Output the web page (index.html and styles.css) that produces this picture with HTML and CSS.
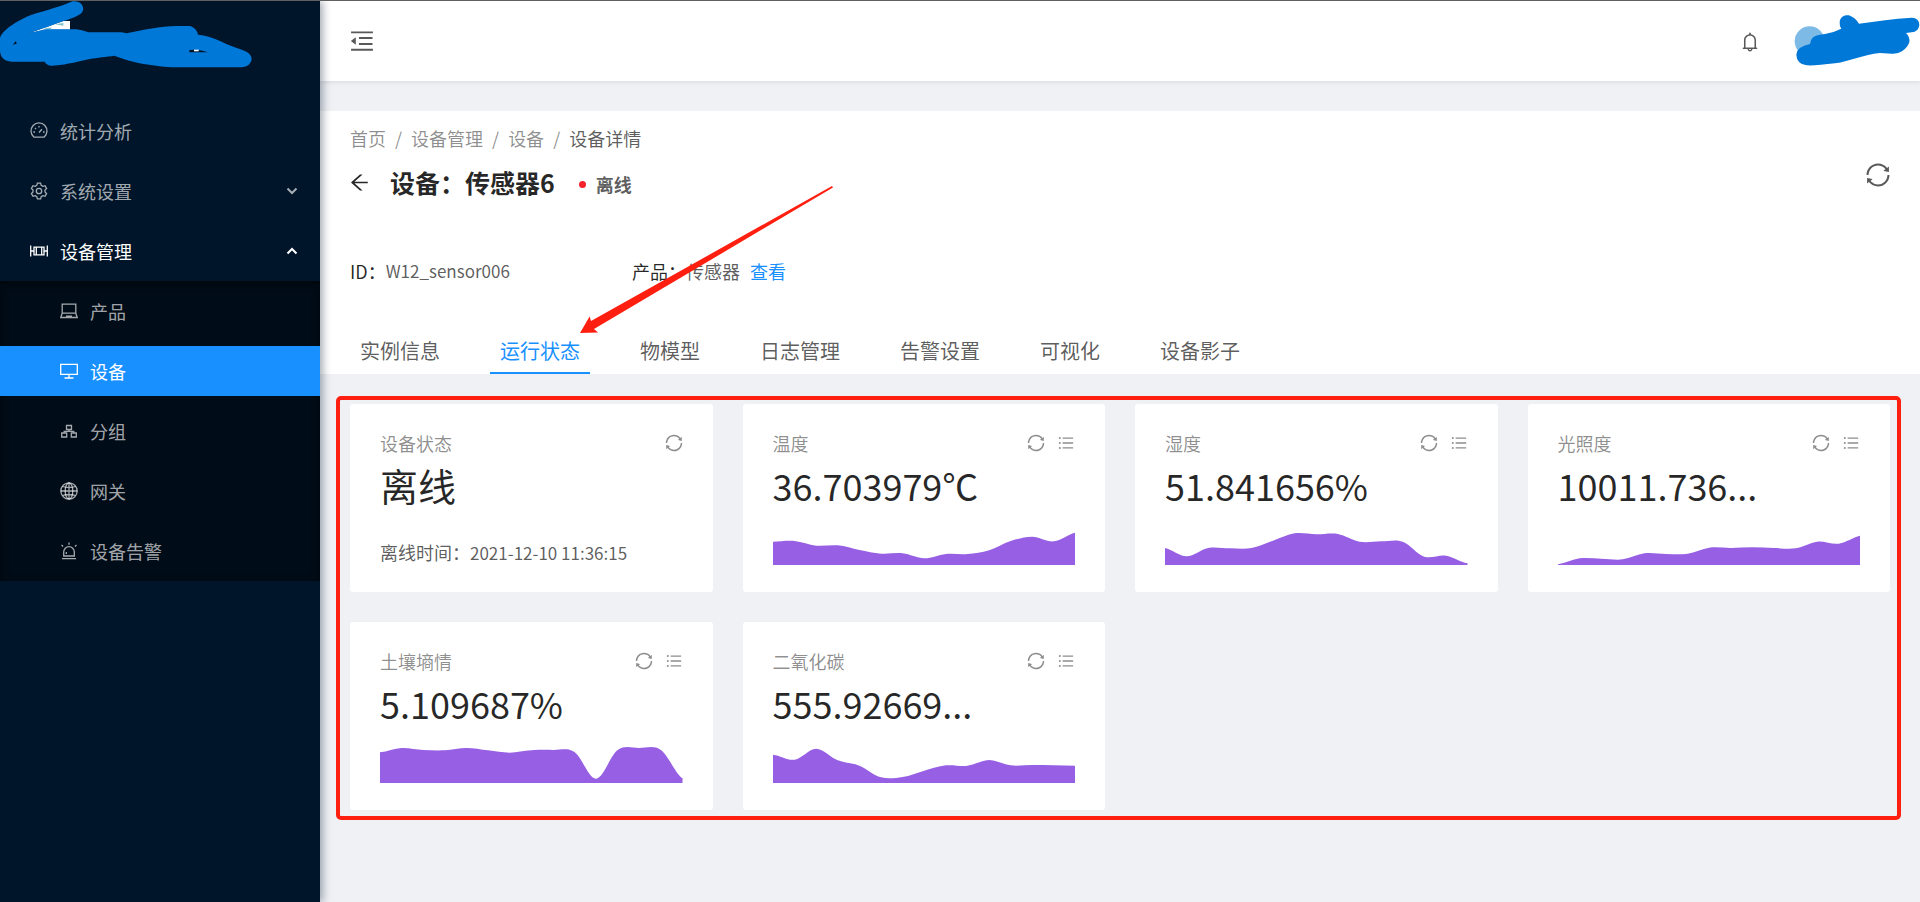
FILE: index.html
```html
<!DOCTYPE html>
<html lang="zh-CN">
<head>
<meta charset="utf-8">
<title>设备详情</title>
<link rel="stylesheet" href="styles.css">
</head>
<body>
<svg class="sprite" aria-hidden="true">
  <symbol id="i-sync" viewBox="0 0 1024 1024"><path d="M168 504.2c1-43.7 10-86.1 26.9-126 17.3-41 42.1-77.7 73.7-109.4S337 212.3 378 195c42.4-17.9 87.4-27 133.9-27s91.5 9.1 133.8 27A341.5 341.5 0 01755 268.8c9.9 9.9 19.2 20.4 27.8 31.4l-60.2 47a8 8 0 003 14.1l175.7 43c5 1.2 9.9-2.6 9.9-7.7l.8-180.9c0-6.7-7.7-10.5-12.9-6.3l-56.4 44.1C765.8 155.1 646.2 92 511.8 92 282.7 92 96.3 275.6 92 503.8a8 8 0 008 8.2h60c4.4 0 7.9-3.5 8-7.8zm756 7.8h-60c-4.4 0-7.9 3.5-8 7.8-1 43.7-10 86.1-26.9 126-17.3 41-42.1 77.8-73.7 109.4A342.45 342.45 0 01512.1 856a342.24 342.24 0 01-243.2-100.8c-9.9-9.9-19.2-20.4-27.8-31.4l60.2-47a8 8 0 00-3-14.1l-175.7-43c-5-1.2-9.9 2.6-9.9 7.7l-.7 181c0 6.7 7.7 10.5 12.9 6.3l56.4-44.1C258.2 868.9 377.8 932 512.2 932c229.2 0 415.5-183.7 419.8-411.8a8 8 0 00-8-8.2z"/></symbol>
  <symbol id="i-list" viewBox="-57 -57 1138 1138"><path d="M320 192h600v72H320zM320 476h600v72H320zM320 760h600v72H320z"/><circle cx="160" cy="228" r="56"/><circle cx="160" cy="512" r="56"/><circle cx="160" cy="796" r="56"/></symbol>
</svg>
<div class="layout">
  <aside class="sider">
    <div class="logo">
      <svg class="logo-mark" viewBox="0 0 960 243" aria-hidden="true">
        <path fill="#fff" d="M88 99L190 63h20v26h-70z"/>
        <path fill="#7cc4c9" d="M130 88l12-5h14l-6 6zM165 73l25-4v8z"/>
        <path fill="#0078d7" fill-rule="evenodd" d="M218 4C242 0 254 20 248 34C240 52 190 62 150 78L88 99L135 88H230Q250 91 265 97H365L380 100C430 90 480 78 530 78H570Q590 84 594 104C640 108 670 130 700 140C735 152 755 158 755 178Q752 200 725 202H515C450 196 400 190 343 167C320 170 290 173 270 177C220 188 190 196 152 197Q138 194 134 185H35C10 183 0 170 0 150V115C5 90 50 65 80 50C120 35 170 25 218 4ZM38 134L50 131L48 123ZM568 157H624Q600 147 568 150Z"/>
        <path fill="#fff" d="M582 149h14v5h-14z"/>
      </svg>
    </div>
    <nav class="menu">
      <a class="item" href="#">
        <svg class="ico" viewBox="0 0 18 18"><path d="M4 15.2a8 8 0 1 1 10 0zM9 10.5l3-3.2M3.4 10h1.6M13 10h1.6M5 6l1 1M9 4v1.5"/></svg>
        <span>统计分析</span>
      </a>
      <a class="item" href="#">
        <svg class="ico" viewBox="0 0 18 18"><path d="M7.4 1.2h3.2l.6 2.2 1.6.9 2.2-.6 1.6 2.8-1.6 1.6v1.8l1.6 1.6-1.6 2.8-2.2-.6-1.6.9-.6 2.2H7.4l-.6-2.2-1.6-.9-2.2.6-1.6-2.8L3 9.900V8.100L1.400 6.500 3 3.700l2.200.6 1.600-.9z"/><circle cx="9" cy="9" r="2.700"/></svg>
        <span>系统设置</span>
        <svg class="chev" viewBox="0 0 12 8"><path d="M1.500 1.500L6 6l4.500-4.500"/></svg>
      </a>
      <a class="item open" href="#">
        <svg class="ico" viewBox="0 0 18 18"><path d="M.7 3.500v11M17.300 3.500v11M1 9h3M14 9h3M4 5.200h10v7.600H4zM6.300 5v8M11.700 5v8"/></svg>
        <span>设备管理</span>
        <svg class="chev" viewBox="0 0 12 8"><path d="M1.500 6.500L6 2l4.500 4.500"/></svg>
      </a>
      <div class="submenu">
        <a class="item" href="#">
          <svg class="ico" viewBox="0 0 18 18"><path d="M2.200 2.200h13.600v9H2.200zM2.200 11.200L.8 15.500h16.400l-1.400-4.300M6 14.200h6"/></svg>
          <span>产品</span>
        </a>
        <a class="item active" href="#" aria-current="page">
          <svg class="ico" viewBox="0 0 18 18"><path d="M.7 2.300h16.600v10H.7zM9 12.300v3.500M4.500 16h9"/></svg>
          <span>设备</span>
        </a>
        <a class="item" href="#">
          <svg class="ico" viewBox="0 0 18 18"><path d="M6.500 3.500h5v4h-5zM1.700 11h5v4h-5zM11.300 11h5v4h-5zM9 7.500v1.800M4.200 11V9.300h9.600V11"/></svg>
          <span>分组</span>
        </a>
        <a class="item" href="#">
          <svg class="ico" viewBox="0 0 18 18"><circle cx="9" cy="9" r="8.200"/><ellipse cx="9" cy="9" rx="3.800" ry="8.200"/><path d="M9 .8v16.400M.8 9h16.400M2.500 4.500q6.500 2 13 0M2.500 13.500q6.500-2 13 0"/></svg>
          <span>网关</span>
        </a>
        <a class="item" href="#">
          <svg class="ico" viewBox="0 0 18 18"><path d="M3.700 14V10a5.300 5.300 0 0 1 10.600 0v4zM2 16.700h14M9 .5v2.200M1.500 3l1.600 1.400M16.500 3l-1.600 1.400M6.300 12v-2"/></svg>
          <span>设备告警</span>
        </a>
      </div>
    </nav>
  </aside>

  <div class="main">
    <header class="header">
      <button class="icon-btn fold" aria-label="收起菜单">
        <svg viewBox="0 0 1024 1024"><path d="M408 442h480c4.400 0 8-3.600 8-8v-56c0-4.400-3.600-8-8-8H408c-4.400 0-8 3.600-8 8v56c0 4.400 3.600 8 8 8zm-8 204c0 4.400 3.600 8 8 8h480c4.400 0 8-3.600 8-8v-56c0-4.400-3.600-8-8-8H408c-4.400 0-8 3.600-8 8v56zm504-486H120c-4.400 0-8 3.600-8 8v56c0 4.400 3.600 8 8 8h784c4.400 0 8-3.600 8-8v-56c0-4.400-3.600-8-8-8zm0 632H120c-4.400 0-8 3.600-8 8v56c0 4.400 3.600 8 8 8h784c4.400 0 8-3.600 8-8v-56c0-4.400-3.600-8-8-8zM115.400 518.900L271.700 642c5.800 4.600 14.400.5 14.400-6.900V388.900c0-7.400-8.500-11.500-14.400-6.900L115.400 505.100a8.740 8.740 0 000 13.800z"/></svg>
      </button>
      <button class="icon-btn bell" aria-label="通知">
        <svg viewBox="0 0 1024 1024"><path d="M816 768h-24V428c0-141.100-104.300-257.800-240-277.200V112c0-22.100-17.900-40-40-40s-40 17.900-40 40v38.800C336.300 170.200 232 286.900 232 428v340h-24c-17.700 0-32 14.300-32 32v32c0 4.400 3.600 8 8 8h216c0 61.800 50.200 112 112 112s112-50.200 112-112h216c4.400 0 8-3.600 8-8v-32c0-17.700-14.300-32-32-32zM512 888c-26.500 0-48-21.500-48-48h96c0 26.500-21.500 48-48 48zM304 768V428c0-55.600 21.600-107.800 60.900-147.100S456.400 220 512 220c55.600 0 107.800 21.600 147.100 60.900S720 372.400 720 428v340H304z"/></svg>
      </button>
      <button class="user" aria-label="用户">
        <svg viewBox="279 40 381 162"><circle cx="329" cy="122" r="45" fill="#7dbbe6"/><path fill="#0078d7" d="M419 65C420 45 440 42 450 45Q465 50 477 69C530 62 580 53 635 51Q658 52 658 73Q655 95 635 95L618 97Q630 108 628 125Q622 142 606 152Q595 160 575 159L540 157C490 162 450 182 405 188C370 192 340 195 320 194Q290 190 289 162Q290 138 330 130Q332 105 360 102L375 100Q400 96 424 84Q418 78 419 65Z"/></svg>
      </button>
    </header>

    <section class="page-head">
      <nav class="crumbs" aria-label="面包屑">
        <a href="#">首页</a><i>/</i><a href="#">设备管理</a><i>/</i><a href="#">设备</a><i>/</i><span>设备详情</span>
      </nav>
      <div class="title-row">
        <button class="icon-btn back" aria-label="返回">
          <svg viewBox="0 0 1024 1024"><path d="M872 474H286.900l350.200-304c5.600-4.900 2.200-14-5.200-14h-88.500c-3.900 0-7.600 1.400-10.500 3.900L155 487.800a31.960 31.960 0 000 48.300L535.100 866c1.500 1.300 3.300 2 5.200 2h91.500c7.400 0 10.800-9.200 5.200-14L286.900 550H872c4.400 0 8-3.600 8-8v-60c0-4.400-3.600-8-8-8z"/></svg>
        </button>
        <h1>设备：传感器6</h1>
        <span class="status"><span class="dot"></span>离线</span>
        <button class="icon-btn reload" aria-label="刷新"><svg><use href="#i-sync"/></svg></button>
      </div>
      <dl class="facts">
        <div><dt>ID：</dt><dd class="latin">W12_sensor006</dd></div>
        <div><dt>产品：</dt><dd>传感器<a href="#">查看</a></dd></div>
      </dl>
      <div class="tabs" role="tablist">
        <button role="tab">实例信息</button>
        <button role="tab" class="on" aria-selected="true">运行状态</button>
        <button role="tab">物模型</button>
        <button role="tab">日志管理</button>
        <button role="tab">告警设置</button>
        <button role="tab">可视化</button>
        <button role="tab">设备影子</button>
      </div>
    </section>

    <main class="cards">
      <article class="card">
        <header><h2>设备状态</h2><button class="icon-btn" aria-label="刷新"><svg><use href="#i-sync"/></svg></button></header>
        <p class="state">离线</p>
        <p class="foot">离线时间：<time class="latin">2021-12-10 11:36:15</time></p>
      </article>
      <article class="card">
        <header><h2>温度</h2><button class="icon-btn" aria-label="刷新"><svg><use href="#i-sync"/></svg></button><button class="icon-btn" aria-label="列表"><svg><use href="#i-list"/></svg></button></header>
        <p class="value">36.703979℃</p>
        <svg class="chart" data-values="70,72,58,59,45,34,35,20,33,33,44,72,85,71,97"></svg>
      </article>
      <article class="card">
        <header><h2>湿度</h2><button class="icon-btn" aria-label="刷新"><svg><use href="#i-sync"/></svg></button><button class="icon-btn" aria-label="列表"><svg><use href="#i-list"/></svg></button></header>
        <p class="value">51.841656%</p>
        <svg class="chart" data-values="51,26,51,50,51,73,95,92,93,70,71,70,25,28,5"></svg>
      </article>
      <article class="card">
        <header><h2>光照度</h2><button class="icon-btn" aria-label="刷新"><svg><use href="#i-sync"/></svg></button><button class="icon-btn" aria-label="列表"><svg><use href="#i-list"/></svg></button></header>
        <p class="value">10011.736...</p>
        <svg class="chart" data-values="2,20,19,17,35,33,34,52,51,53,51,50,70,64,88"></svg>
      </article>
      <article class="card">
        <header><h2>土壤墒情</h2><button class="icon-btn" aria-label="刷新"><svg><use href="#i-sync"/></svg></button><button class="icon-btn" aria-label="列表"><svg><use href="#i-list"/></svg></button></header>
        <p class="value">5.109687%</p>
        <svg class="chart" data-values="92,105,99,98,105,98,91,98,99,93,13,99,105,99,14"></svg>
      </article>
      <article class="card">
        <header><h2>二氧化碳</h2><button class="icon-btn" aria-label="刷新"><svg><use href="#i-sync"/></svg></button><button class="icon-btn" aria-label="列表"><svg><use href="#i-list"/></svg></button></header>
        <p class="value">555.92669...</p>
        <svg class="chart" data-values="85,70,103,68,52,17,18,37,53,52,69,53,54,53,52"></svg>
      </article>
      <div class="frame"></div>
    </main>
    <svg class="pointer" viewBox="0 0 254 148" aria-hidden="true"><path d="M0 147L9.600 130.500L11 135L252 0L253 1.500L14 143L18 146.500Z"/></svg>
  </div>
</div>
<script src="charts.js"></script>
</body>
</html>
```

FILE: styles.css
```css
* { box-sizing: border-box; }

body {
  margin: 0;
  border-top: 1px solid #606060;
  background: #eff1f5;
  color: rgba(0, 0, 0, .65);
  font: 18px/28px "Noto Sans CJK SC", "Noto Sans", sans-serif;
}

h1, h2, p, dl, dd { margin: 0; font-weight: 400; }
a { color: inherit; text-decoration: none; }
button { padding: 0; border: 0; background: none; color: inherit; font: inherit; cursor: pointer; }
svg { display: block; }
.sprite { position: absolute; width: 0; height: 0; }
.latin { font-size: 17px; }

.layout { display: flex; min-height: calc(100vh - 1px); }

/* Sidebar */
.sider {
  position: relative;
  z-index: 2;
  flex: none;
  width: 320px;
  background: #001529;
  box-shadow: 3px 0 8px rgba(0, 21, 41, .35);
}
.logo { height: 80px; }
.logo-mark { width: 100%; margin-top: -1px; }
.menu { padding-top: 21px; }
.item {
  display: flex;
  align-items: center;
  height: 50px;
  margin: 5px 0 10px;
  padding: 0 22px 0 30px;
  color: rgba(255, 255, 255, .65);
}
.item.open { margin-bottom: 5px; color: #fff; }
.ico { width: 18px; height: 18px; margin-right: 12px; }
.ico, .chev { fill: none; stroke: currentColor; stroke-width: 1.3; }
.chev { width: 12px; height: 8px; margin-left: auto; stroke-width: 2; }
.submenu {
  display: flex;
  flex-direction: column;
  gap: 10px;
  padding: 5px 0;
  background: #000c17;
  box-shadow: inset 0 3px 10px rgba(0, 0, 0, .45);
}
.submenu .item { margin: 0; padding-left: 60px; }
.submenu .active { background: #1890ff; color: #fff; }

/* Header */
.main { position: relative; flex: 1; min-width: 0; }
.header {
  display: flex;
  align-items: center;
  height: 80px;
  padding-left: 30px;
  background: #fff;
  box-shadow: 0 1px 5px rgba(0, 21, 41, .1);
}
.icon-btn svg { width: 20px; height: 20px; fill: currentColor; }
.fold svg { width: 28px; height: 28px; }
.fold { margin-left: -2px; }
.bell { margin: 2px 0 0 auto; }
.bell svg { width: 22px; height: 22px; }
.user { width: 127px; margin-left: 32px; }

/* Page heading */
.page-head { margin-top: 30px; padding: 13px 30px 0; background: #fff; }
.crumbs { display: flex; color: rgba(0, 0, 0, .45); }
.crumbs i { margin: 0 9px; font-style: normal; }
.crumbs span { color: rgba(0, 0, 0, .65); }
.title-row { display: flex; align-items: center; height: 40px; margin-top: 10px; }
.back { margin: 0 19px 0 -2px; color: rgba(0, 0, 0, .85); }
.back svg { width: 23px; height: 23px; }
h1 { color: rgba(0, 0, 0, .85); font-size: 25px; font-weight: 700; line-height: 40px; }
.status { display: flex; align-items: center; gap: 10px; margin: 4px 0 0 24px; font-weight: 700; }
.dot { width: 7px; height: 7px; border-radius: 50%; background: #f5222d; }
.reload { align-self: flex-start; margin: -1px -2px 0 auto; }
.reload svg { width: 28px; height: 28px; }
.facts { display: grid; grid-template-columns: 282px auto; margin-top: 55px; }
.facts div { display: flex; }
.facts dt { color: rgba(0, 0, 0, .85); }
.facts a { margin-left: 10px; color: #1890ff; }
.tabs { display: flex; gap: 40px; margin-top: 44px; }
.tabs button { height: 45px; padding: 0 10px; border-bottom: 2px solid transparent; font-size: 20px; }
.tabs .on { border-color: #1890ff; color: #1890ff; }

/* Status cards */
.cards {
  position: relative;
  display: grid;
  grid-template-columns: repeat(4, 1fr);
  gap: 30px;
  margin: 30px;
}
.card { padding: 25px 30px 27px; border-radius: 3px; background: #fff; }
.card header { display: flex; align-items: center; gap: 10px; margin-right: -1px; color: rgba(0, 0, 0, .45); }
.card h2 { flex: 1; font-size: 18px; line-height: 28px; }
.value, .state { margin-top: 5px; color: rgba(0, 0, 0, .85); font-size: 36px; line-height: 46px; }
.state { font-size: 38px; }
.foot { margin-top: 32px; line-height: 24px; }
.chart { width: 100%; height: 45px; margin-top: 12px; fill: #975fe4; }

/* Red annotations over the content */
.frame {
  position: absolute;
  inset: -8px -11px -10px -14px;
  border: 4px solid #ff1f10;
  border-radius: 5px;
  pointer-events: none;
}
.pointer {
  position: absolute;
  left: 260px;
  top: 185px;
  width: 254px;
  height: 148px;
  fill: #ff1f10;
  pointer-events: none;
}
```

FILE: charts.js
```js
// Fills each sparkline with a smooth area through its values.
const W = 910, H = 135;
document.querySelectorAll('.chart').forEach((svg) => {
  const values = svg.dataset.values.split(',').map(Number);
  const step = W / (values.length - 1);
  const pts = values.map((v, i) => [i * step, H - v]);
  const last = pts.length - 1;
  let d = `M${pts[0]}`;
  for (let i = 0; i < last; i++) {
    const a = pts[Math.max(i - 1, 0)], b = pts[i], c = pts[i + 1];
    const e = pts[Math.min(i + 2, last)];
    const y1 = b[1] + (c[1] - a[1]) / 6;
    const y2 = c[1] - (e[1] - b[1]) / 6;
    d += `C${b[0] + step / 3} ${y1} ${c[0] - step / 3} ${y2} ${c}`;
  }
  const path = document.createElementNS('http://www.w3.org/2000/svg', 'path');
  path.setAttribute('d', `${d}V${H}H0Z`);
  svg.setAttribute('viewBox', `0 0 ${W} ${H}`);
  svg.setAttribute('preserveAspectRatio', 'none');
  svg.append(path);
});
```
